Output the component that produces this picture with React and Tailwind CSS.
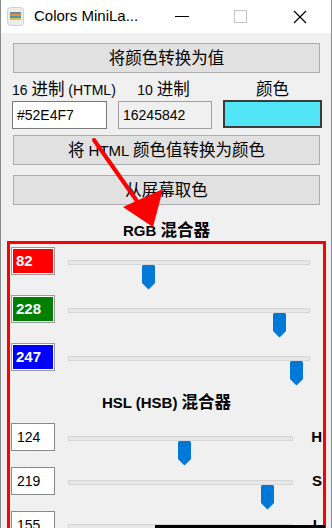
import React from 'react';

const rgbRows = [
  { value: 82, bg: 'bg-[#ff0000]' },
  { value: 228, bg: 'bg-[#008000]' },
  { value: 247, bg: 'bg-[#0000ff]' },
];

const hslRows = [
  { value: 124, label: 'H' },
  { value: 219, label: 'S' },
  { value: 155, label: 'L' },
];

// CJK glyphs in the original render a touch larger than the Latin text
const Zh = ({ children }) => <span className="text-[16.5px]">{children}</span>;

const Thumb = ({ left }) => (
  <svg className="absolute top-[5px]" style={{ left }} width="13" height="25" viewBox="0 0 13 25">
    <path d="M0 1.5a1.5 1.5 0 0 1 1.5-1.5h10a1.5 1.5 0 0 1 1.5 1.5v16.5l-6.5 6.5l-6.5-6.5z" fill="#0078d7" />
  </svg>
);

const Slider = ({ value, max, width }) => (
  <div className={`relative h-[30px] ${width === 242 ? 'w-[242px]' : 'w-[225px]'}`}>
    <div className="mt-[13px] h-[5px] rounded-[1px] border border-[#d6d6d6] bg-[#e7e7e7]" />
    <Thumb left={Math.round((value / max) * (width - 13))} />
  </div>
);

const WinButton = ({ children }) => (
  <button className="flex h-[30px] w-[307px] items-center justify-center border border-[#adadad] bg-[#e1e1e1] text-[15px] leading-[20px] text-black">
    <span>{children}</span>
  </button>
);

const AppIcon = () => (
  <svg width="17" height="19" viewBox="0 0 17 19">
    <rect x="0.5" y="0.5" width="16" height="18" rx="3" fill="#ececec" stroke="#d0d0d0" />
    <rect x="3" y="5" width="11" height="2" fill="#6b8aa6" />
    <rect x="3" y="7" width="11" height="2" fill="#ef8a3c" />
    <rect x="3" y="9" width="11" height="2" fill="#3a9fb4" />
    <rect x="3" y="11" width="11" height="2" fill="#e9b949" />
  </svg>
);

export default function App() {
  return (
    <div
      className="relative h-[528px] w-[332px] overflow-hidden border-x border-[#8a8a8a] bg-[#f0f0f0] text-black"
      style={{ fontFamily: '"Liberation Sans", "Noto Sans CJK SC", sans-serif' }}
    >
      {/* title bar */}
      <div className="flex h-[33px] items-center bg-white">
        <div className="ml-[6px]">
          <AppIcon />
        </div>
        <span className="ml-[10px] flex-1 text-[15px]">Colors MiniLa...</span>
        <div className="flex h-full w-[59px] items-center justify-center">
          <div className="h-px w-[14px] bg-black" />
        </div>
        <div className="flex h-full w-[59px] items-center justify-center">
          <div className="h-[13px] w-[13px] border border-[#c4c4c4]" />
        </div>
        <div className="mr-[2px] flex h-full w-[59px] items-center justify-center">
          <svg width="14" height="14" viewBox="0 0 14 14">
            <path d="M1 1L13 13M13 1L1 13" stroke="#000" strokeWidth="1.2" />
          </svg>
        </div>
      </div>

      {/* converter */}
      <div className="pl-[12px]">
        <div className="mt-[10px]">
          <WinButton><Zh>将颜色转换为值</Zh></WinButton>
        </div>
        <div className="mt-[6px] grid grid-cols-[94px_94px_99px] gap-x-[11px] text-[14px]">
          <div className="-ml-px h-[21px] whitespace-nowrap leading-[21px]">16 <Zh>进制</Zh> (HTML)</div>
          <div className="h-[21px] whitespace-nowrap pr-[3px] text-center leading-[21px]">10 <Zh>进制</Zh></div>
          <div className="h-[21px] text-center leading-[21px]"><Zh>颜色</Zh></div>
          <div className="-ml-px mt-px flex h-[28px] items-center border border-[#7a7a7a] bg-white pl-[4px]">#52E4F7</div>
          <div className="mt-px flex h-[28px] items-center border border-[#a0a0a0] bg-[#f0f0f0] pl-[4px]">16245842</div>
          <div className="h-[28px] border-2 border-[#3c3c3c] bg-[#52e4f7]" />
        </div>
        <div className="mt-[6px]">
          <WinButton><Zh>将</Zh> HTML <Zh>颜色值转换为颜色</Zh></WinButton>
        </div>
        <div className="mt-[10px]">
          <WinButton><Zh>从屏幕取色</Zh></WinButton>
        </div>
        <div className="mt-[15px] h-[20px] w-[307px] text-center text-[15px] font-bold leading-[20px]">RGB <Zh>混合器</Zh></div>
      </div>

      {/* mixers, outlined in red */}
      <div className="ml-[6px] mt-px w-[319px] border-[3px] border-b-0 border-[#ff0000] pb-4">
        <div className="flex flex-col gap-[20px] pt-[3px]">
          {rgbRows.map((row) => (
            <div key={row.value} className="flex h-[28px] items-start">
              <div className="ml-px h-[28px] w-[44px] border border-[#9a9a9a] bg-white p-px">
                <div className={`h-full pl-[3px] text-[15px] font-bold leading-[24px] text-white ${row.bg}`}>{row.value}</div>
              </div>
              <div className="ml-[13px]">
                <Slider value={row.value} max={255} width={242} />
              </div>
            </div>
          ))}
        </div>

        <div className="mt-[21px] h-[20px] text-center text-[15px] font-bold leading-[20px]">HSL (HSB) <Zh>混合器</Zh></div>

        <div className="mt-[11px] flex flex-col gap-[16px]">
          {hslRows.map((row) => (
            <div key={row.label} className="flex h-[28px] items-start">
              <div className="ml-px flex h-[28px] w-[44px] items-center border border-[#8a8a8a] bg-white pl-[5px] text-[14px]">
                {row.value}
              </div>
              <div className="ml-[13px]">
                <Slider value={row.value} max={240} width={225} />
              </div>
              <div className="ml-auto mr-px flex h-[28px] items-center text-[15px] font-bold">{row.label}</div>
            </div>
          ))}
        </div>
      </div>

      {/* red annotation arrow */}
      <svg className="pointer-events-none absolute left-0 top-0" width="332" height="528" viewBox="0 0 332 528">
        <path d="M93 140L138 204" stroke="#ff0000" strokeWidth="4" strokeLinecap="round" />
        <polygon points="152,227 122,207 162,189" fill="#ff0000" />
      </svg>

      {/* taskbar edge peeking in */}
      <div className="absolute bottom-0 left-[154px] h-[3px] w-[170px] bg-black" />
    </div>
  );
}
